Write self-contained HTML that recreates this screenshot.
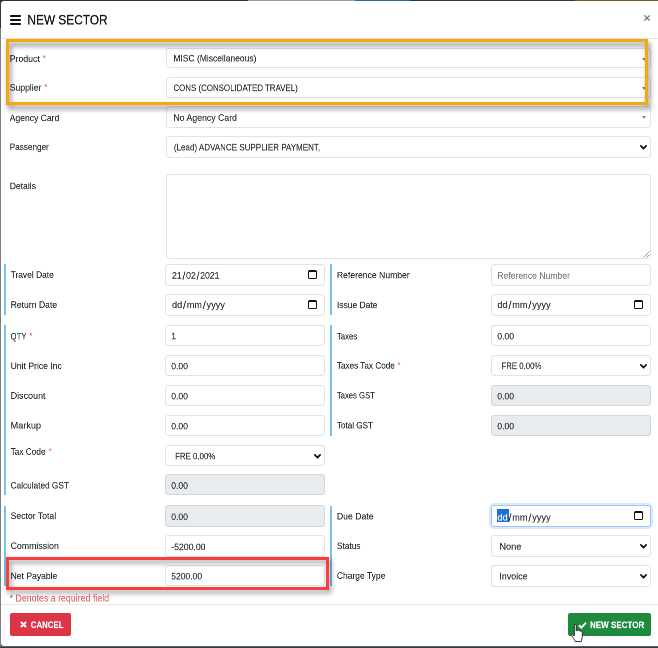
<!DOCTYPE html>
<html lang="en"><head><meta charset="utf-8"><title>New Sector</title>
<style>
html,body{margin:0;padding:0}
body{width:658px;height:648px;overflow:hidden;position:relative;background:#33373b;font-family:"Liberation Sans",sans-serif;color:#212529}
.abs,.t,.box,.bl{position:absolute}
#strip i{position:absolute;top:0;height:1px;display:block}
#modal{position:absolute;left:.8px;top:1px;width:660px;height:644.6px;background:#fff;border-radius:3px 0 0 3px}
.t{white-space:nowrap;transform-origin:0 0;will-change:transform;line-height:12px;font-size:10px;color:#2e3237;-webkit-text-stroke:.3px currentColor}
.lbl{color:#272b30;-webkit-text-stroke:.25px currentColor}
.req{color:#e25564}
.t i{font-style:normal;margin:0 1.8px;font-size:1.18em;line-height:0;position:relative;top:1.5px}
.box{box-sizing:border-box;border:1.5px solid #dde3e8;border-radius:3px;background:#fff}
.dis{background:#e9ecef;border-color:#d0d6dc}
.bl{width:1.9px;background:#78c0ee}
.ph{color:#7b8288}
.cal{position:absolute;width:9px;height:9px;box-sizing:border-box;border:1px solid #111;border-top-width:2.6px;border-radius:1.5px}
.tri{position:absolute;width:0;height:0;border-left:2.7px solid transparent;border-right:2.7px solid transparent;border-top:3.4px solid #858585}
svg{position:absolute;overflow:visible}
</style></head>
<body>
<div id="strip"><i style="left:0;width:248px;background:#2c3034"></i><i style="left:248px;width:107px;background:#9a9c9e"></i><i style="left:355px;width:55px;background:#2f6d9c"></i><i style="left:410px;width:165px;background:#33373b"></i><i style="left:575px;width:83px;background:#7a621c"></i></div>
<div class="abs" style="left:0;top:28px;width:1px;height:620px;background:#7d7f82"></div>
<div id="modal"></div>
<div class="abs" style="left:9.7px;top:14.9px;width:11.5px;height:2px;background:#101316;border-radius:.8px"></div>
<div class="abs" style="left:9.7px;top:18.85px;width:11.5px;height:2px;background:#101316;border-radius:.8px"></div>
<div class="abs" style="left:9.7px;top:22.8px;width:11.5px;height:2px;background:#101316;border-radius:.8px"></div>
<span id="t1" class="t " style="left:27px;top:11px;font-size:28px;line-height:34px;transform:translate(0.40px,0.45px) scale(0.4237,.5);color:#16191c;-webkit-text-stroke:.6px currentColor">NEW SECTOR</span>
<svg style="left:644px;top:15px" width="6" height="6" viewBox="0 0 6 6"><path d="M0.3 0.3 L5.7 5.7 M5.7 0.3 L0.3 5.7" stroke="#666a6e" stroke-width="1.2" fill="none"/></svg>
<div class="abs" style="left:1px;top:38px;width:657px;height:1px;background:#e3e7ea"></div>
<div class="box " style="left:166.1px;top:47.6px;width:485.30px;height:20.60px;"></div>
<span id="t2" class="t " style="left:173px;top:52px;font-size:19.2px;line-height:24px;transform:translate(0.40px,0.42px) scale(0.4423,.5);">MISC (Miscellaneous)</span>
<div class="tri" style="left:641.5px;top:58.0px"></div>
<span id="t3" class="t lbl" style="left:9px;top:52px;font-size:19.2px;line-height:24px;transform:translate(0.70px,0.82px) scale(0.4551,.5);">Product</span>
<span id="t4" class="t req" style="left:42px;top:52px;font-size:19.2px;line-height:24px;transform:translate(0.60px,0.32px) scale(0.4500,.5);-webkit-text-stroke:0">*</span>
<div class="box " style="left:166.1px;top:76.7px;width:485.30px;height:21.40px;"></div>
<span id="t5" class="t " style="left:173px;top:82px;font-size:19.2px;line-height:24px;transform:translate(0.40px,0.02px) scale(0.4123,.5);">CONS (CONSOLIDATED TRAVEL)</span>
<div class="tri" style="left:641.5px;top:86.9px"></div>
<span id="t6" class="t lbl" style="left:9px;top:81px;font-size:19.2px;line-height:24px;transform:translate(0.70px,0.62px) scale(0.4502,.5);">Supplier</span>
<span id="t7" class="t req" style="left:44px;top:81px;font-size:19.2px;line-height:24px;transform:translate(0.10px,0.12px) scale(0.4500,.5);-webkit-text-stroke:0">*</span>
<div class="box " style="left:166.1px;top:106.1px;width:485.30px;height:21.60px;"></div>
<span id="t8" class="t " style="left:173px;top:111px;font-size:19.2px;line-height:24px;transform:translate(0.40px,0.82px) scale(0.4545,.5);">No Agency Card</span>
<div class="tri" style="left:641.5px;top:116.0px"></div>
<span id="t9" class="t lbl" style="left:9px;top:112px;font-size:19.2px;line-height:24px;transform:translate(0.70px,0.12px) scale(0.4472,.5);">Agency Card</span>
<div class="box " style="left:166.1px;top:136.0px;width:485.30px;height:21.60px;"></div>
<span id="t10" class="t " style="left:173px;top:141px;font-size:19.2px;line-height:24px;transform:translate(0.90px,0.42px) scale(0.4180,.5);">(Lead) ADVANCE SUPPLIER PAYMENT,</span>
<svg style="left:640.1px;top:144.5px" width="7" height="5.25" viewBox="0 0 8 6"><path d="M1 1.1 L4 4.1 L7 1.1" fill="none" stroke="#111" stroke-width="2" stroke-linecap="round" stroke-linejoin="round"/></svg>
<span id="t11" class="t lbl" style="left:9px;top:141px;font-size:19.2px;line-height:24px;transform:translate(0.70px,0.02px) scale(0.4262,.5);">Passenger</span>
<div class="box " style="left:166.1px;top:174.2px;width:485.30px;height:84.80px;"></div>
<span id="t12" class="t lbl" style="left:9px;top:180px;font-size:19.2px;line-height:24px;transform:translate(0.70px,0.12px) scale(0.4484,.5);">Details</span>
<svg style="left:643.4px;top:251.2px" width="7" height="7" viewBox="0 0 7 7"><path d="M0.5 6.5 L6.5 0.5 M3.5 6.5 L6.5 3.5" stroke="#777" stroke-width="0.8" fill="none"/></svg>
<div class="bl" style="left:4px;top:264px;height:51.30px"></div>
<div class="bl" style="left:4px;top:325px;height:170.00px"></div>
<div class="bl" style="left:4px;top:505.5px;height:80.50px"></div>
<div class="bl" style="left:330px;top:264px;height:51.30px"></div>
<div class="bl" style="left:330px;top:325px;height:111.00px"></div>
<div class="bl" style="left:330px;top:505.5px;height:80.50px"></div>
<div class="box " style="left:165.29999999999998px;top:264.20000000000005px;width:160.10px;height:21.60px;"></div>
<span id="t13" class="t lbl" style="left:10px;top:268px;font-size:19.2px;line-height:24px;transform:translate(0.60px,0.82px) scale(0.4387,.5);">Travel Date</span>
<span id="t14" class="t " style="left:172px;top:269px;font-size:19.2px;line-height:24px;transform:translate(0.00px,0.62px) scale(0.4508,.5);">21<i>/</i>02<i>/</i>2021</span>
<div class="cal" style="left:308.0px;top:270.4px"></div>
<div class="box " style="left:165.29999999999998px;top:294.0px;width:160.10px;height:21.90px;"></div>
<span id="t15" class="t lbl" style="left:10px;top:298px;font-size:19.2px;line-height:24px;transform:translate(0.60px,0.82px) scale(0.4495,.5);">Return Date</span>
<span id="t16" class="t " style="left:172px;top:298px;font-size:19.2px;line-height:24px;transform:translate(0.00px,0.92px) scale(0.4737,.5);">dd<i>/</i>mm<i>/</i>yyyy</span>
<div class="cal" style="left:308.0px;top:300.34999999999997px"></div>
<div class="box " style="left:165.29999999999998px;top:324.90000000000003px;width:160.10px;height:21.10px;"></div>
<span id="t17" class="t lbl" style="left:10px;top:330px;font-size:19.2px;line-height:24px;transform:translate(0.60px,0.42px) scale(0.4030,.5);">QTY</span>
<span id="t18" class="t req" style="left:29px;top:329px;font-size:19.2px;line-height:24px;transform:translate(0.20px,0.92px) scale(0.4500,.5);-webkit-text-stroke:0">*</span>
<span id="t19" class="t " style="left:171px;top:330px;font-size:19.2px;line-height:24px;transform:translate(0.40px,0.22px) scale(0.4225,.5);">1</span>
<div class="box " style="left:165.29999999999998px;top:355.0px;width:160.10px;height:21.10px;"></div>
<span id="t20" class="t lbl" style="left:10px;top:360px;font-size:19.2px;line-height:24px;transform:translate(0.60px,0.02px) scale(0.4487,.5);">Unit Price Inc</span>
<span id="t21" class="t " style="left:171px;top:360px;font-size:19.2px;line-height:24px;transform:translate(0.20px,0.32px) scale(0.4470,.5);">0.00</span>
<div class="box " style="left:165.29999999999998px;top:385.0px;width:160.10px;height:21.20px;"></div>
<span id="t22" class="t lbl" style="left:10px;top:389px;font-size:19.2px;line-height:24px;transform:translate(0.60px,0.72px) scale(0.4675,.5);">Discount</span>
<span id="t23" class="t " style="left:171px;top:390px;font-size:19.2px;line-height:24px;transform:translate(0.20px,0.42px) scale(0.4470,.5);">0.00</span>
<div class="box " style="left:165.29999999999998px;top:414.90000000000003px;width:160.10px;height:21.10px;"></div>
<span id="t24" class="t lbl" style="left:10px;top:419px;font-size:19.2px;line-height:24px;transform:translate(0.60px,0.52px) scale(0.4751,.5);">Markup</span>
<span id="t25" class="t " style="left:171px;top:420px;font-size:19.2px;line-height:24px;transform:translate(0.20px,0.32px) scale(0.4470,.5);">0.00</span>
<div class="box " style="left:165.29999999999998px;top:445.0px;width:160.10px;height:21.10px;"></div>
<span id="t26" class="t lbl" style="left:10px;top:445px;font-size:19.2px;line-height:24px;transform:translate(0.60px,0.72px) scale(0.4305,.5);">Tax Code</span>
<span id="t27" class="t req" style="left:48px;top:445px;font-size:19.2px;line-height:24px;transform:translate(0.50px,0.22px) scale(0.4500,.5);-webkit-text-stroke:0">*</span>
<span id="t28" class="t " style="left:175px;top:450px;font-size:19.2px;line-height:24px;transform:translate(0.10px,0.32px) scale(0.4087,.5);">FRE 0.00%</span>
<svg style="left:314.0px;top:453.65px" width="7" height="5.25" viewBox="0 0 8 6"><path d="M1 1.1 L4 4.1 L7 1.1" fill="none" stroke="#111" stroke-width="2" stroke-linecap="round" stroke-linejoin="round"/></svg>
<div class="box dis" style="left:165.29999999999998px;top:473.8px;width:160.10px;height:21.60px;"></div>
<span id="t29" class="t lbl" style="left:10px;top:479px;font-size:19.2px;line-height:24px;transform:translate(0.60px,0.52px) scale(0.4305,.5);">Calculated GST</span>
<span id="t30" class="t " style="left:171px;top:479px;font-size:19.2px;line-height:24px;transform:translate(0.20px,0.72px) scale(0.4470,.5);">0.00</span>
<div class="box dis" style="left:165.29999999999998px;top:505.3px;width:160.10px;height:21.50px;"></div>
<span id="t31" class="t lbl" style="left:10px;top:509px;font-size:19.2px;line-height:24px;transform:translate(0.60px,0.92px) scale(0.4506,.5);">Sector Total</span>
<span id="t32" class="t " style="left:171px;top:511px;font-size:19.2px;line-height:24px;transform:translate(0.20px,0.02px) scale(0.4470,.5);">0.00</span>
<div class="box " style="left:165.29999999999998px;top:535.0px;width:160.10px;height:21.60px;"></div>
<span id="t33" class="t lbl" style="left:10px;top:539px;font-size:19.2px;line-height:24px;transform:translate(0.60px,0.92px) scale(0.4566,.5);">Commission</span>
<span id="t34" class="t " style="left:171px;top:541px;font-size:19.2px;line-height:24px;transform:translate(0.20px,0.12px) scale(0.4528,.5);">-5200.00</span>
<div class="box " style="left:165.29999999999998px;top:565.0px;width:160.10px;height:21.40px;"></div>
<span id="t35" class="t lbl" style="left:10px;top:570px;font-size:19.2px;line-height:24px;transform:translate(0.60px,0.02px) scale(0.4468,.5);">Net Payable</span>
<span id="t36" class="t " style="left:171px;top:570px;font-size:19.2px;line-height:24px;transform:translate(0.20px,0.42px) scale(0.4455,.5);">5200.00</span>
<div class="box " style="left:491.40000000000003px;top:264.20000000000005px;width:160.00px;height:21.60px;"></div>
<span id="t37" class="t lbl" style="left:336px;top:269px;font-size:19.2px;line-height:24px;transform:translate(0.90px,0.22px) scale(0.4491,.5);">Reference Number</span>
<span id="t38" class="t ph" style="left:497px;top:269px;font-size:19.2px;line-height:24px;transform:translate(0.30px,0.72px) scale(0.4478,.5);">Reference Number</span>
<div class="box " style="left:491.40000000000003px;top:294.0px;width:160.00px;height:21.90px;"></div>
<span id="t39" class="t lbl" style="left:336px;top:299px;font-size:19.2px;line-height:24px;transform:translate(0.90px,0.12px) scale(0.4415,.5);">Issue Date</span>
<span id="t40" class="t " style="left:497px;top:298px;font-size:19.2px;line-height:24px;transform:translate(0.30px,0.92px) scale(0.4782,.5);">dd<i>/</i>mm<i>/</i>yyyy</span>
<div class="cal" style="left:634.0px;top:300.34999999999997px"></div>
<div class="box " style="left:491.40000000000003px;top:324.90000000000003px;width:160.00px;height:21.10px;"></div>
<span id="t41" class="t lbl" style="left:336px;top:330px;font-size:19.2px;line-height:24px;transform:translate(0.90px,0.42px) scale(0.4050,.5);">Taxes</span>
<span id="t42" class="t " style="left:497px;top:330px;font-size:19.2px;line-height:24px;transform:translate(0.30px,0.42px) scale(0.4470,.5);">0.00</span>
<div class="box " style="left:491.40000000000003px;top:355.0px;width:160.00px;height:21.10px;"></div>
<span id="t43" class="t lbl" style="left:336px;top:359px;font-size:19.2px;line-height:24px;transform:translate(0.90px,0.62px) scale(0.4252,.5);">Taxes Tax Code</span>
<span id="t44" class="t req" style="left:397px;top:359px;font-size:19.2px;line-height:24px;transform:translate(0.30px,0.12px) scale(0.4500,.5);-webkit-text-stroke:0">*</span>
<span id="t45" class="t " style="left:501px;top:360px;font-size:19.2px;line-height:24px;transform:translate(0.40px,0.02px) scale(0.4076,.5);">FRE 0.00%</span>
<svg style="left:640.0px;top:363.65px" width="7" height="5.25" viewBox="0 0 8 6"><path d="M1 1.1 L4 4.1 L7 1.1" fill="none" stroke="#111" stroke-width="2" stroke-linecap="round" stroke-linejoin="round"/></svg>
<div class="box dis" style="left:491.40000000000003px;top:385.0px;width:160.00px;height:21.20px;"></div>
<span id="t46" class="t lbl" style="left:336px;top:389px;font-size:19.2px;line-height:24px;transform:translate(0.90px,0.42px) scale(0.3993,.5);">Taxes GST</span>
<span id="t47" class="t " style="left:497px;top:390px;font-size:19.2px;line-height:24px;transform:translate(0.30px,0.42px) scale(0.4470,.5);">0.00</span>
<div class="box dis" style="left:491.40000000000003px;top:414.90000000000003px;width:160.00px;height:21.10px;"></div>
<span id="t48" class="t lbl" style="left:336px;top:419px;font-size:19.2px;line-height:24px;transform:translate(0.90px,0.42px) scale(0.4232,.5);">Total GST</span>
<span id="t49" class="t " style="left:497px;top:420px;font-size:19.2px;line-height:24px;transform:translate(0.30px,0.32px) scale(0.4470,.5);">0.00</span>
<div class="box " style="left:491.40000000000003px;top:505.3px;width:160.00px;height:21.50px;border-color:#9cc6f5;box-shadow:0 0 0 2px rgba(130,180,245,.3)"></div>
<span id="t50" class="t lbl" style="left:336px;top:510px;font-size:19.2px;line-height:24px;transform:translate(0.90px,0.42px) scale(0.4515,.5);">Due Date</span>
<div class="abs" style="left:497.4px;top:509.4px;width:11.6px;height:12.5px;background:#1a6fd6"></div>
<span id="t51" class="t " style="left:497px;top:511px;font-size:19.2px;line-height:24px;transform:translate(0.30px,0.52px) scale(0.4782,.5);"><span style="color:#fff">dd</span><i>/</i>mm<i>/</i>yyyy</span>
<div class="cal" style="left:634.0px;top:511.44999999999993px"></div>
<div class="box " style="left:491.40000000000003px;top:535.2px;width:160.00px;height:21.40px;"></div>
<span id="t52" class="t lbl" style="left:336px;top:540px;font-size:19.2px;line-height:24px;transform:translate(0.90px,0.02px) scale(0.4338,.5);">Status</span>
<span id="t53" class="t " style="left:499px;top:540px;font-size:19.2px;line-height:24px;transform:translate(0.40px,0.62px) scale(0.4774,.5);">None</span>
<svg style="left:640.0px;top:544.0000000000001px" width="7" height="5.25" viewBox="0 0 8 6"><path d="M1 1.1 L4 4.1 L7 1.1" fill="none" stroke="#111" stroke-width="2" stroke-linecap="round" stroke-linejoin="round"/></svg>
<div class="box " style="left:491.40000000000003px;top:565.3000000000001px;width:160.00px;height:21.30px;"></div>
<span id="t54" class="t lbl" style="left:336px;top:569px;font-size:19.2px;line-height:24px;transform:translate(0.90px,0.72px) scale(0.4419,.5);">Charge Type</span>
<span id="t55" class="t " style="left:499px;top:570px;font-size:19.2px;line-height:24px;transform:translate(0.40px,0.42px) scale(0.4622,.5);">Invoice</span>
<svg style="left:640.0px;top:574.0500000000001px" width="7" height="5.25" viewBox="0 0 8 6"><path d="M1 1.1 L4 4.1 L7 1.1" fill="none" stroke="#111" stroke-width="2" stroke-linecap="round" stroke-linejoin="round"/></svg>
<span id="t56" class="t " style="left:9px;top:592px;font-size:19.6px;line-height:24px;transform:translate(0.60px,0.05px) scale(0.4496,.5);color:#e05562;-webkit-text-stroke:.1px currentColor">* Denotes a required field</span>
<div class="abs" style="left:1px;top:604px;width:657px;height:1px;background:#e6e9ec"></div>
<div class="abs" style="left:10px;top:613.4px;width:61px;height:22.2px;background:#dc3545;border-radius:2px"></div>
<svg style="left:20px;top:621px" width="7" height="7" viewBox="0 0 7 7"><path d="M1 1 L6 6 M6 1 L1 6" stroke="#fff" stroke-width="2" fill="none"/></svg>
<span id="t57" class="t " style="left:30px;top:618px;font-size:18.4px;line-height:24px;transform:translate(0.80px,0.96px) scale(0.4268,.5);color:#fff;font-weight:bold">CANCEL</span>
<div class="abs" style="left:568px;top:613.4px;width:83px;height:22.2px;background:#1e8a3e;border-radius:2px"></div>
<svg style="left:578px;top:620.6px" width="9" height="8" viewBox="0 0 9 8"><path d="M1 4.2 L3.4 6.6 L8 1.6" stroke="#fff" stroke-width="2" fill="none"/></svg>
<span id="t58" class="t " style="left:590px;top:619px;font-size:18.4px;line-height:24px;transform:translate(0.00px,0.06px) scale(0.4367,.5);color:#fff;font-weight:bold">NEW SECTOR</span>
<svg style="left:569.5px;top:623.5px" width="14" height="19" viewBox="0 0 14 20"><path d="M4.2 1.2 C4.2 0.2 6.2 0.2 6.2 1.2 L6.2 7 L7.2 7 C7.2 6 9 6 9 7.2 C9.2 6.4 10.8 6.6 10.8 7.8 C11.2 7.2 12.6 7.4 12.6 8.8 L12.6 13 C12.6 15 11.8 16 11.4 18.5 L5.2 18.5 C4.6 16.5 2.6 14.5 1.4 12.2 C0.8 11 2.2 10.2 3 11.2 L4.2 12.6 Z" fill="#fff" stroke="#222" stroke-width="1"/></svg>
<div class="abs" style="left:6px;top:38.5px;width:642px;height:66.5px;box-sizing:border-box;border:3.3px solid #f5a80a;filter:drop-shadow(2.6px 4.3px 2.6px rgba(0,0,0,.5))"></div>
<div class="abs" style="left:6px;top:557px;width:323px;height:33px;box-sizing:border-box;border:3px solid #fa3c3c;filter:drop-shadow(2.2px 3.6px 2.5px rgba(0,0,0,.44))"></div>
<div class="abs" style="left:0;top:645.6px;width:658px;height:2.4px;background:linear-gradient(#85878a,#3a3d40 55%,#2c2f32)"></div>
</body></html>
